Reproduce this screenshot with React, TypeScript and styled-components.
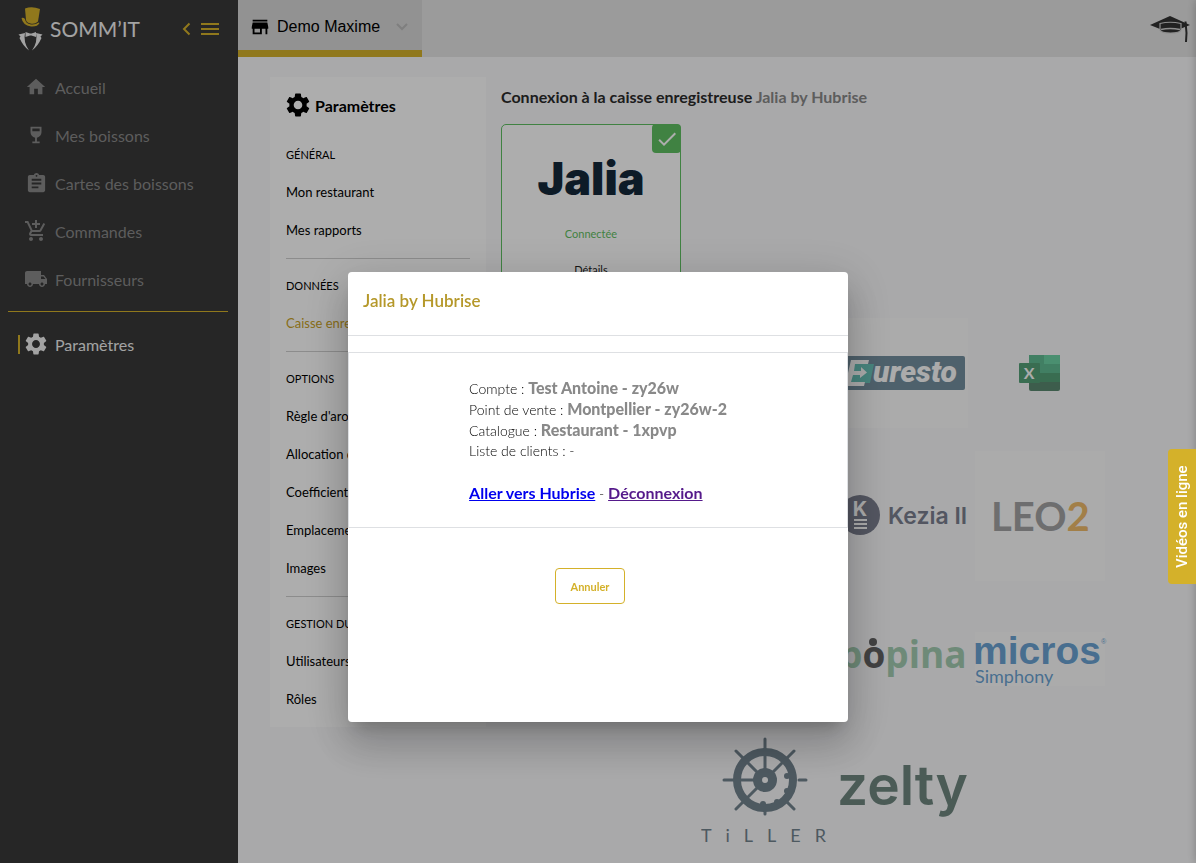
import React from "react";
import styled, { createGlobalStyle } from "styled-components";
import {
  MdHome,
  MdWineBar,
  MdAssignment,
  MdAddShoppingCart,
  MdLocalShipping,
  MdStore,
  MdMenu,
  MdCheck,
} from "react-icons/md";

const gold = "#d4b12a";
const sans = `Lato, "Liberation Sans", sans-serif`;

const GlobalStyle = createGlobalStyle`
  *, *::before, *::after { box-sizing: border-box; }
  body { margin: 0; background: #f9f9fb; font-family: ${sans}; }
  a { text-decoration: none; color: inherit; }
  button { font-family: inherit; cursor: pointer; padding: 0; border: 0; background: none; }
  h1, h2, h3, ul, p { margin: 0; padding: 0; }
  ul { list-style: none; }
`;

const Page = styled.div`
  display: flex;
  min-height: 100vh;
`;

const Sidebar = styled.aside`
  flex: 0 0 238px;
  background: #383838;
`;

const Brand = styled.div`
  display: flex;
  align-items: center;
  height: 57px;
  padding: 0 16px 0 18px;
`;

const BrandName = styled.span`
  flex: 1;
  margin-left: 7px;
  color: #f0f0f0;
  font-size: 21px;
  line-height: 24px;
`;

const CollapseButton = styled.button`
  display: flex;
  align-items: center;
  gap: 7px;
  color: ${gold};
`;

const NavList = styled.ul`
  padding-top: 6px;
`;

const NavLink = styled.a<{ $active?: boolean }>`
  display: flex;
  align-items: center;
  height: 48px;
  margin-left: 18px;
  color: ${(p) => (p.$active ? "#f0f0f0" : "#898989")};
  font-size: 16px;
  &::before {
    content: "";
    width: 2px;
    height: 19px;
    background: ${(p) => (p.$active ? gold : "transparent")};
  }
`;

const NavIcon = styled.span`
  display: flex;
  justify-content: center;
  width: 24px;
  margin: 0 7px 0 4px;
`;

const NavDivider = styled.hr`
  height: 1px;
  margin: 8px 10px 8px 8px;
  border: 0;
  background: ${gold};
`;

const Main = styled.div`
  flex: 1;
  min-width: 0;
`;

const TopBar = styled.header`
  display: flex;
  justify-content: space-between;
  align-items: stretch;
  height: 57px;
  padding-right: 6px;
  background: #e5e5e5;
`;

const RestaurantTab = styled.button`
  display: flex;
  align-items: center;
  width: 184px;
  padding: 4px 14px 0 11px;
  border-bottom: 7px solid ${gold};
  background: #d7d7d7;
  font-family: "Liberation Sans", Arial, sans-serif;
  font-size: 16px;
  color: #000;
  span {
    flex: 1;
    margin-left: 6px;
    text-align: left;
  }
`;

const AcademyLink = styled.a`
  display: flex;
  align-items: center;
`;

const Body = styled.div`
  display: flex;
  align-items: flex-start;
  gap: 15px;
  padding: 20px 28px 0 32px;
`;

const Panel = styled.nav`
  flex: 0 0 216px;
  padding: 16px 16px 0;
  background: #fff;
`;

const PanelTitle = styled.h1`
  display: flex;
  align-items: center;
  gap: 5px;
  height: 24px;
  margin-bottom: 35px;
  font-size: 16px;
  font-weight: 700;
`;

const Section = styled.section`
  padding-bottom: 9px;
  & + & {
    border-top: 1px solid #cfcfcf;
    padding-top: 9px;
  }
`;

const SectionTitle = styled.h2`
  height: 36px;
  font-size: 11px;
  line-height: 36px;
  font-weight: 400;
  white-space: nowrap;
  ${Section}:first-of-type & {
    height: 21px;
    line-height: 6px;
  }
`;

const PanelLink = styled.a<{ $active?: boolean }>`
  display: block;
  height: 38px;
  font-size: 13px;
  line-height: 38px;
  white-space: nowrap;
  color: ${(p) => (p.$active ? "#c9a227" : "#000")};
`;

const Content = styled.main`
  flex: 1;
  min-width: 0;
`;

const ContentTitle = styled.h2`
  margin-bottom: 7px;
  font-size: 16px;
  line-height: 40px;
  font-weight: 700;
  color: #2b2b2b;
  span {
    color: #898989;
  }
`;

const RegisterCard = styled.article`
  position: relative;
  display: flex;
  flex-direction: column;
  align-items: center;
  width: 180px;
  height: 164px;
  margin-bottom: 20px;
  padding-top: 26px;
  border: 1px solid #5fc062;
  border-radius: 5px;
  background: #fff;
`;

const CheckBadge = styled.span`
  position: absolute;
  top: -1px;
  right: -1px;
  display: flex;
  align-items: center;
  justify-content: center;
  width: 29px;
  height: 29px;
  border-radius: 4px;
  background: #5fc062;
  color: #fff;
`;

const CardStatus = styled.span`
  margin-top: 17px;
  font-size: 11px;
  line-height: 16px;
  color: #5fc062;
`;

const CardButton = styled.button`
  margin-top: 20px;
  font-size: 11px;
  line-height: 16px;
  color: #222;
`;

const PartnerGrid = styled.div`
  display: grid;
  grid-template-columns: repeat(4, 130px);
  grid-template-rows: repeat(3, 130px) auto;
  gap: 13px 7px;
  justify-content: center;
  align-items: center;
`;

const Partner = styled.button<{ $col: number; $row: number }>`
  display: block;
  grid-column: ${(p) => p.$col};
  grid-row: ${(p) => p.$row};
  opacity: 0.7;
  svg {
    display: block;
    overflow: visible;
  }
`;

const Overlay = styled.div`
  position: fixed;
  inset: 0;
  display: flex;
  justify-content: center;
  align-items: flex-start;
  padding-top: 272px;
  background: rgba(0, 0, 0, 0.32);
`;

const Dialog = styled.div`
  width: 500px;
  min-height: 450px;
  border-radius: 4px;
  background: #fff;
  box-shadow: 0 11px 15px -7px rgba(0, 0, 0, 0.2), 0 24px 38px 3px rgba(0, 0, 0, 0.14),
    0 9px 46px 8px rgba(0, 0, 0, 0.12);
`;

const DialogTitle = styled.h2`
  height: 64px;
  padding: 0 15px;
  border-bottom: 1px solid #dee0e3;
  font-size: 17px;
  line-height: 57px;
  font-weight: 600;
  color: #b5982a;
`;

const DialogBody = styled.div`
  display: flex;
  justify-content: center;
  height: 176px;
  margin-top: 16px;
  padding-top: 24px;
  border: 1px solid #dee0e3;
`;

const Details = styled.div`
  font-size: 14px;
  line-height: 21px;
  font-weight: 300;
  color: #000;
  p {
    height: 21px;
  }
  strong {
    font-size: 16px;
    font-weight: 900;
    color: #898989;
  }
`;

const DetailLinks = styled.p`
  margin-top: 21px;
`;

const DetailLink = styled.a<{ $visited?: boolean }>`
  font-size: 16px;
  font-weight: 700;
  text-decoration: underline;
  color: ${(p) => (p.$visited ? "#551a8b" : "#0000ee")};
`;

const DialogActions = styled.div`
  display: flex;
  justify-content: center;
  padding: 40px 16px 0 0;
`;

const CancelButton = styled.button`
  width: 70px;
  height: 36px;
  border: 1px solid ${gold};
  border-radius: 4px;
  font-size: 11px;
  font-weight: 700;
  color: ${gold};
`;

const VideoTab = styled.button`
  position: fixed;
  top: 449px;
  right: 0;
  width: 28px;
  height: 135px;
  border-radius: 0 4px 4px 0;
  background: ${gold};
  color: #fff;
  font-family: Roboto, sans-serif;
  font-size: 15px;
  font-weight: 500;
  writing-mode: vertical-rl;
  transform: rotate(180deg);
`;

const DrawerEdge = styled.div`
  position: fixed;
  top: 0;
  bottom: 0;
  left: 100%;
  width: 10px;
  box-shadow: 0 0 10px rgba(0, 0, 0, 0.25);
`;

const Gear = ({ size }: { size: number }) => (
  <svg width={size} height={size} viewBox="2 2 20 20" fill="currentColor" aria-hidden="true">
    <path d="M19.14 12.94c.04-.3.06-.61.06-.94 0-.32-.02-.64-.07-.94l2.03-1.58c.18-.14.23-.41.12-.61l-1.92-3.32c-.12-.22-.37-.29-.59-.22l-2.39.96c-.5-.38-1.03-.7-1.62-.94l-.36-2.54c-.04-.24-.24-.41-.48-.41h-3.84c-.24 0-.43.17-.47.41l-.36 2.54c-.59.24-1.13.57-1.62.94l-2.39-.96c-.22-.08-.47 0-.59.22L2.74 8.87c-.12.21-.08.47.12.61l2.03 1.58c-.05.3-.09.63-.09.94s.02.64.07.94l-2.03 1.58c-.18.14-.23.41-.12.61l1.92 3.32c.12.22.37.29.59.22l2.39-.96c.5.38 1.03.7 1.62.94l.36 2.54c.05.24.24.41.48.41h3.84c.24 0 .44-.17.47-.41l.36-2.54c.59-.24 1.13-.56 1.62-.94l2.39.96c.22.08.47 0 .59-.22l1.92-3.32c.12-.22.07-.47-.12-.61l-2.01-1.58zM12 15.6c-1.98 0-3.6-1.62-3.6-3.6s1.62-3.6 3.6-3.6 3.6 1.62 3.6 3.6-1.62 3.6-3.6 3.6z" />
  </svg>
);

const HatLogo = () => (
  <svg width="25" height="44" viewBox="0 0 25 44" aria-hidden="true">
    <path d="M7 1.500Q14-1 22 2L20 14.500Q17 17.500 12.500 16.500Q8.500 15.500 8 13Z" fill={gold} />
    <path d="M3.500 11Q5.500 10 7 12Q7.500 16.500 13 17.500Q17.500 18 20.500 15.500L21.500 16Q19.500 20 13 19.500Q4.500 18 3.500 11Z" fill={gold} />
    <path d="M7.500 25L12 26.500H13.500L18 25V30L13.500 28.500H12L7.500 30Z" fill="#f0f0f0" />
    <path d="M7 26L0.500 27.500L2.500 29.500L1.500 31Q5 39 11 43.500Q5 35 7 26ZM18 26L24.500 27.500L22.500 29.500L23.500 31Q20 39 14 43.500Q20 35 18 26Z" fill="#f0f0f0" />
  </svg>
);

const GraduationCap = () => (
  <svg width="40" height="28" viewBox="0 0 40 28" aria-hidden="true">
    <path d="M0 10L20 1L40 10L30 14H10Z" fill="#333" />
    <path d="M10 8.500Q20 6 31 8.500V15Q30 18 20.500 18Q11 18 10 15Z" fill="#333" stroke="#d0d0d0" strokeWidth="1.200" />
    <path d="M11 14.500Q20 12.500 30 14.500" fill="none" stroke="#d0d0d0" strokeWidth="1.400" />
    <path d="M35.500 6.500L36.500 18L36 27" fill="none" stroke="#333" strokeWidth="2" />
  </svg>
);

const JaliaLogo = () => (
  <svg width="120" height="58" viewBox="0 0 120 58" role="img" aria-label="Jalia">
    <text x="60" y="44" textAnchor="middle" fontFamily="Inter" fontWeight="900" fontSize="45" fill="#14293a">
      Jalia
    </text>
  </svg>
);

const Euresto = () => (
  <svg width="130" height="110" viewBox="0 0 130 110">
    <rect width="130" height="110" fill="#fff" />
    <rect x="-2" y="38" width="129" height="34" rx="2" fill="#3c6379" />
    <path d="M14 46H36L32 65H10Z" fill="#2fae9f" />
    <path d="M13 42H31L30 46H17L16 53H23V49L29 54.500L22 60V57H15L13 64H27L26 68H7Z" fill="#fff" />
    <text x="35" y="64" fontFamily="Roboto" fontWeight="900" fontStyle="italic" fontSize="30" fill="#fff">uresto</text>
  </svg>
);

const Excel = () => (
  <svg width="130" height="130" viewBox="0 0 130 130">
    <rect x="54" y="47" width="31" height="36" rx="2" fill="#185c37" />
    <rect x="54" y="47" width="31" height="27" fill="#107c41" />
    <rect x="54" y="47" width="31" height="18" fill="#21a366" />
    <rect x="69" y="47" width="16" height="9" fill="#33c481" />
    <rect x="44" y="55" width="21" height="20" rx="1" fill="#107c41" />
    <text x="54" y="71" textAnchor="middle" fontFamily="Lato" fontWeight="700" fontSize="16" fill="#fff">X</text>
  </svg>
);

const Kezia = () => (
  <svg width="130" height="130" viewBox="0 0 130 130">
    <circle cx="22" cy="64" r="20" fill="#464c62" />
    <text x="22" y="65" textAnchor="middle" fontFamily="Inter" fontWeight="700" fontSize="20" fill="#fff">K</text>
    <path d="M16 69H29M16 73H29M16 77H29" stroke="#fff" strokeWidth="2" />
    <text x="50" y="73" fontFamily="Inter" fontWeight="600" fontSize="23" fill="#464c62">Kezia II</text>
  </svg>
);

const Leo2 = () => (
  <svg width="130" height="130" viewBox="0 0 130 130">
    <rect width="130" height="130" fill="#fff" />
    <text x="16" y="80" fontFamily="Lato" fontWeight="700" fontSize="40" fill="#808080">
      LEO<tspan fill="#eba22f">2</tspan>
    </text>
  </svg>
);

const Popina = () => (
  <svg width="130" height="130" viewBox="0 0 130 130">
    <text x="1" y="74" fontFamily="Open Sans" fontWeight="700" fontSize="37" fill="#7fb992">
      p<tspan fill="#222">o</tspan>pina
    </text>
    <circle cx="35" cy="48" r="4" fill="#222" />
  </svg>
);

const Micros = () => (
  <svg width="130" height="54" viewBox="0 0 130 54">
    <rect width="130" height="54" fill="#fff" />
    <text x="-2" y="32" fontFamily="Liberation Sans" fontWeight="700" fontSize="39" fill="#2f7fc3">micros</text>
    <text x="126" y="12" fontFamily="Liberation Sans" fontSize="7" fill="#2f7fc3">®</text>
    <text x="0" y="51" fontFamily="Lato" fontSize="18" fill="#2f7fc3">Simphony</text>
  </svg>
);

const Tiller = () => (
  <svg width="130" height="107" viewBox="0 0 130 107">
    <g stroke="#3a5260" fill="none" strokeLinecap="round">
      <circle cx="64" cy="43" r="28" strokeWidth="8" />
      <path d="M64 2V43M23 43H64M35 14L64 43M93 14L80 27M93 72L86 65M35 72L56 51M98 43H105M64 75V77M64 43L80 27" strokeWidth="3" />
    </g>
    <g fill="#3a5260">
      <circle cx="64" cy="43" r="12" />
      <circle cx="86" cy="39" r="3" />
      <circle cx="86" cy="54" r="3" />
      <circle cx="76" cy="65" r="3" />
      <circle cx="62" cy="67" r="3" />
    </g>
    <circle cx="64" cy="43" r="3" fill="#fff" />
    <text x="0" y="105" fontFamily="Lato" fontSize="18" letterSpacing="14" fill="#3a5260">TiLLER</text>
  </svg>
);

const Zelty = () => (
  <svg width="130" height="107" viewBox="0 0 130 107">
    <text x="-1" y="68" fontFamily="Inter" fontWeight="600" fontSize="55" fill="#35574c">zelty</text>
  </svg>
);

const navItems = [
  { label: "Accueil", icon: <MdHome size={22} /> },
  { label: "Mes boissons", icon: <MdWineBar size={22} /> },
  { label: "Cartes des boissons", icon: <MdAssignment size={23} /> },
  { label: "Commandes", icon: <MdAddShoppingCart size={24} /> },
  { label: "Fournisseurs", icon: <MdLocalShipping size={24} /> },
];

const sections = [
  { title: "GÉNÉRAL", links: ["Mon restaurant", "Mes rapports"] },
  { title: "DONNÉES", links: ["Caisse enregistreuse"] },
  {
    title: "OPTIONS",
    links: ["Règle d'arondi", "Allocation des stocks", "Coefficient", "Emplacements", "Images"],
  },
  { title: "GESTION DU COMPTE", links: ["Utilisateurs", "Rôles"] },
];

const partners = [
  { name: "Euresto", col: 3, row: 1, logo: <Euresto /> },
  { name: "Excel", col: 4, row: 1, logo: <Excel /> },
  { name: "Kezia II", col: 3, row: 2, logo: <Kezia /> },
  { name: "LEO2", col: 4, row: 2, logo: <Leo2 /> },
  { name: "Popina", col: 3, row: 3, logo: <Popina /> },
  { name: "Micros Simphony", col: 4, row: 3, logo: <Micros /> },
  { name: "Tiller", col: 2, row: 4, logo: <Tiller /> },
  { name: "Zelty", col: 3, row: 4, logo: <Zelty /> },
];

export default function App() {
  return (
    <>
      <GlobalStyle />
      <Page>
        <Sidebar>
          <Brand>
            <HatLogo />
            <BrandName>SOMM’IT</BrandName>
            <CollapseButton aria-label="Réduire le menu">
              <svg width="9" height="14" viewBox="0 0 9 14" fill="none" stroke="currentColor" strokeWidth="2">
                <path d="M7.500 1.500L2 7L7.500 12.500" />
              </svg>
              <MdMenu size={24} />
            </CollapseButton>
          </Brand>
          <NavList>
            {navItems.map((item) => (
              <li key={item.label}>
                <NavLink href="#">
                  <NavIcon>{item.icon}</NavIcon>
                  {item.label}
                </NavLink>
              </li>
            ))}
          </NavList>
          <NavDivider />
          <NavLink href="#" $active>
            <NavIcon><Gear size={22} /></NavIcon>
            Paramètres
          </NavLink>
        </Sidebar>
        <Main>
          <TopBar>
            <RestaurantTab>
              <MdStore size={22} />
              <span>Demo Maxime</span>
              <svg width="12" height="8" viewBox="0 0 12 8" fill="none" stroke="#bbb" strokeWidth="2">
                <path d="M1 1L6 6L11 1" />
              </svg>
            </RestaurantTab>
            <AcademyLink href="#" aria-label="Formation"><GraduationCap /></AcademyLink>
          </TopBar>
          <Body>
            <Panel>
              <PanelTitle><Gear size={24} />Paramètres</PanelTitle>
              {sections.map((s) => (
                <Section key={s.title}>
                  <SectionTitle>{s.title}</SectionTitle>
                  {s.links.map((l) => (
                    <PanelLink key={l} href="#" $active={l === "Caisse enregistreuse"}>{l}</PanelLink>
                  ))}
                </Section>
              ))}
            </Panel>
            <Content>
              <ContentTitle>
                Connexion à la caisse enregistreuse <span>Jalia by Hubrise</span>
              </ContentTitle>
              <RegisterCard>
                <CheckBadge><MdCheck size={24} /></CheckBadge>
                <JaliaLogo />
                <CardStatus>Connectée</CardStatus>
                <CardButton>Détails</CardButton>
              </RegisterCard>
              <PartnerGrid>
                {partners.map((p) => (
                  <Partner key={p.name} $col={p.col} $row={p.row} aria-label={p.name}>{p.logo}</Partner>
                ))}
              </PartnerGrid>
            </Content>
          </Body>
        </Main>
      </Page>
      <DrawerEdge />
      <Overlay>
        <Dialog role="dialog" aria-modal="true" aria-labelledby="dialog-title">
          <DialogTitle id="dialog-title">Jalia by Hubrise</DialogTitle>
          <DialogBody>
            <Details>
              <p>Compte : <strong>Test Antoine - zy26w</strong></p>
              <p>Point de vente : <strong>Montpellier - zy26w-2</strong></p>
              <p>Catalogue : <strong>Restaurant - 1xpvp</strong></p>
              <p>Liste de clients : -</p>
              <DetailLinks>
                <DetailLink href="#">Aller vers Hubrise</DetailLink> -{" "}
                <DetailLink href="#" $visited>Déconnexion</DetailLink>
              </DetailLinks>
            </Details>
          </DialogBody>
          <DialogActions><CancelButton>Annuler</CancelButton></DialogActions>
        </Dialog>
      </Overlay>
      <VideoTab>Vidéos en ligne</VideoTab>
    </>
  );
}
